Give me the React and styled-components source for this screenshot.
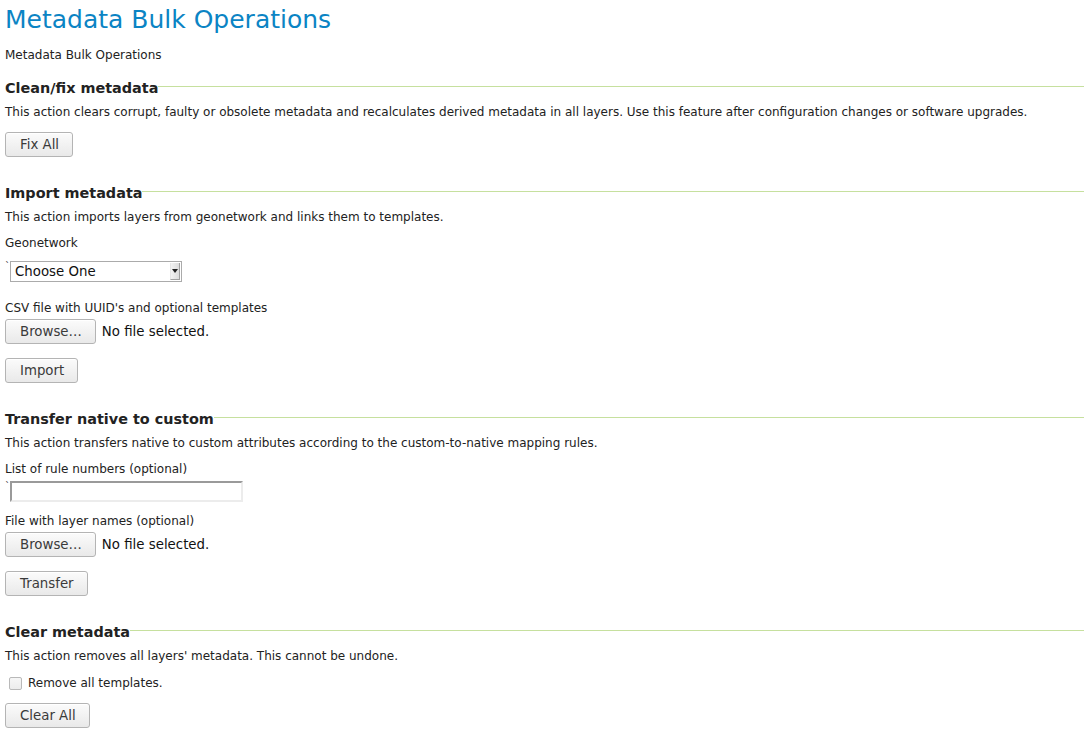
import React from 'react'
import styled, { createGlobalStyle } from 'styled-components'

const GlobalStyle = createGlobalStyle`
    html, body {
        margin: 0;
        padding: 0;
        background: #ffffff;
    }
    body {
        font-family: "DejaVu Sans", Verdana, sans-serif;
        font-size: 12px;
        color: #222222;
    }
`

const Page = styled.div`
    padding: 4px 0 20px 5px;
`

const Title = styled.h1`
    margin: 0;
    font-size: 25px;
    line-height: 32px;
    font-weight: normal;
    color: #0b84c4;
`

const Subtitle = styled.p`
    margin: 11px 0 0;
    line-height: 16px;
`

const Section = styled.section`
    margin-top: ${p => p.$top}px;
`

const Legend = styled.h3`
    display: flex;
    align-items: center;
    margin: 0;
    font-size: 14.4px;
    line-height: 18px;
    font-weight: bold;
    color: #222222;
    &::after {
        content: '';
        flex: 1;
        height: 0;
        border-top: 1px solid #c6e09e;
        margin-top: -3px;
    }
`

const Desc = styled.p`
    margin: 7px 0 0;
    line-height: 16px;
`

const Label = styled.div`
    margin-top: ${p => p.$top}px;
    line-height: 16px;
`

const Row = styled.div`
    display: flex;
    align-items: center;
    gap: 6px;
    margin-top: ${p => p.$top}px;
    font-size: 13.333px;
`

const Tick = styled.span`
    font-size: 10px;
    line-height: 10px;
    align-self: flex-start;
    margin-top: 1px;
    color: #444;
    width: 5px;
    margin-right: -6px;
`

const Button = styled.button`
    box-sizing: border-box;
    height: 25px;
    padding: 0 13px 0 14px;
    font-family: "DejaVu Sans", Verdana, sans-serif;
    font-size: 13.333px;
    color: #3a3a3a;
    border: 1px solid #b4b4b4;
    border-radius: 3px;
    background: linear-gradient(#fbfbfb, #e9e9e9);
    box-shadow: inset 0 1px 0 #ffffff;
    cursor: pointer;
`

const Select = styled.div`
    box-sizing: border-box;
    width: 172px;
    height: 21px;
    display: flex;
    align-items: center;
    justify-content: space-between;
    border: 1px solid #ababab;
    background: #ffffff;
    padding-left: 4px;
    color: #111;
    font-size: 13.333px;
`

const Arrow = styled.span`
    box-sizing: border-box;
    width: 10px;
    height: 17px;
    margin-right: 1px;
    background: linear-gradient(90deg, #f2f2f2, #dcdcdc);
    border-left: 1px solid #e6e6e6;
    border-right: 1px solid #a0a0a0;
    border-bottom: 1px solid #a0a0a0;
    display: flex;
    align-items: center;
    justify-content: center;
`

const TextInput = styled.input`
    box-sizing: border-box;
    width: 233px;
    height: 21px;
    border-top: 2px solid #9a9a9a;
    border-left: 2px solid #9a9a9a;
    border-right: 2px solid #ececec;
    border-bottom: 2px solid #ececec;
    background: #fff;
    padding: 0 3px;
    outline: none;
`

const FileName = styled.span`
    color: #111;
`

const CheckRow = styled.label`
    display: flex;
    align-items: center;
    gap: 6px;
    margin-top: 11px;
    padding-left: 4px;
    line-height: 16px;
`

const Box = styled.span`
    box-sizing: border-box;
    width: 13px;
    height: 13px;
    border: 1px solid #b9b9b9;
    border-radius: 2px;
    background: linear-gradient(#f6f6f6, #ececec);
`

function FileRow({ top }) {
    return (
        <Row $top={top}>
            <Button>Browse…</Button>
            <FileName>No file selected.</FileName>
        </Row>
    )
}

export default function App() {
    return (
        <Page>
            <GlobalStyle />
            <Title>Metadata Bulk Operations</Title>
            <Subtitle>Metadata Bulk Operations</Subtitle>

            <Section $top={16}>
                <Legend>Clean/fix metadata</Legend>
                <Desc>This action clears corrupt, faulty or obsolete metadata and recalculates derived metadata in all layers. Use this feature after configuration changes or software upgrades.</Desc>
                <Row $top={12}><Button>Fix All</Button></Row>
            </Section>

            <Section $top={27}>
                <Legend>Import metadata</Legend>
                <Desc>This action imports layers from geonetwork and links them to templates.</Desc>
                <Label $top={10}>Geonetwork</Label>
                <Row $top={10}>
                    <Tick>`</Tick>
                    <Select>
                        Choose One
                        <Arrow>
                            <svg width="6" height="4" viewBox="0 0 6 4"><path d="M0 0h6L3 4z" fill="#222" /></svg>
                        </Arrow>
                    </Select>
                </Row>
                <Label $top={18}>CSV file with UUID's and optional templates</Label>
                <FileRow top={3} />
                <Row $top={14}><Button>Import</Button></Row>
            </Section>

            <Section $top={27}>
                <Legend>Transfer native to custom</Legend>
                <Desc>This action transfers native to custom attributes according to the custom-to-native mapping rules.</Desc>
                <Label $top={10}>List of rule numbers (optional)</Label>
                <Row $top={4}>
                    <Tick>`</Tick>
                    <TextInput type="text" />
                </Row>
                <Label $top={11}>File with layer names (optional)</Label>
                <FileRow top={3} />
                <Row $top={14}><Button>Transfer</Button></Row>
            </Section>

            <Section $top={27}>
                <Legend>Clear metadata</Legend>
                <Desc>This action removes all layers' metadata. This cannot be undone.</Desc>
                <CheckRow><Box />Remove all templates.</CheckRow>
                <Row $top={12}><Button>Clear All</Button></Row>
            </Section>
        </Page>
    )
}
